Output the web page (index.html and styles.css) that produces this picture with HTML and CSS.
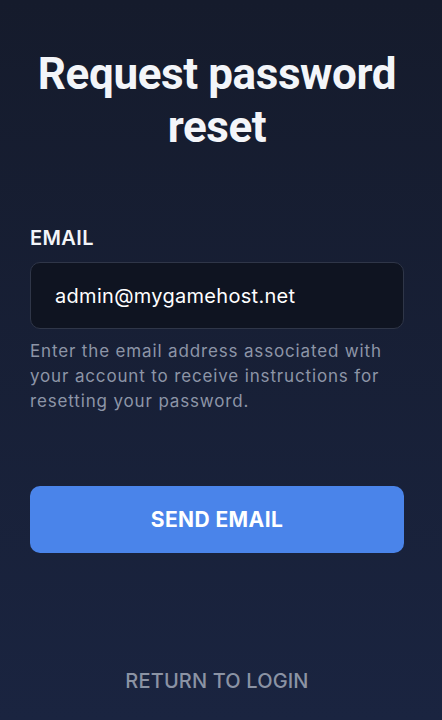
FILE: index.html
```html
<!DOCTYPE html>
<html lang="en">
<head>
  <meta charset="UTF-8">
  <title>Request password reset</title>
  <link rel="stylesheet" href="styles.css">
</head>
<body>
  <main class="reset-page">
    <h1 class="reset-title">Request password reset</h1>
    <form class="reset-form" onsubmit="return false;">
      <label class="field-label" for="email">EMAIL</label>
      <input class="field-input" id="email" type="email" value="admin@mygamehost.net">
      <p class="field-help">Enter the email address associated with your account to receive instructions for resetting your password.</p>
      <button class="send-btn" type="submit">SEND EMAIL</button>
    </form>
    <a class="back-link" href="#">RETURN TO LOGIN</a>
  </main>
</body>
</html>
```

FILE: styles.css
```css
html, body { height: 100%; }
body {
  margin: 0;
  font-family: Inter, "Noto Sans", sans-serif;
  background: linear-gradient(180deg, #151b2c 0%, #1a2440 100%);
  color: #f3f5f9;
}
.reset-page {
  display: flex;
  flex-direction: column;
  padding: 48px 38px 0 30px;
  box-sizing: border-box;
  height: 720px;
}
.reset-title {
  margin: 0;
  text-align: center;
  font-family: Roboto, Inter, sans-serif;
  font-size: 44px;
  line-height: 53px;
  font-weight: 700;
  letter-spacing: -0.4px;
}
.reset-form {
  display: flex;
  flex-direction: column;
  margin-top: 72px;
}
.field-label {
  font-size: 20px;
  font-weight: 600;
  line-height: 24px;
  letter-spacing: 0.4px;
}
.field-input {
  margin-top: 12px;
  height: 67px;
  box-sizing: border-box;
  padding: 0 24px;
  background: #0f1421;
  border: 1px solid #2f3648;
  border-radius: 10px;
  color: #fff;
  font-family: inherit;
  font-size: 20px;
  letter-spacing: 0.3px;
  outline: none;
}
.field-help {
  margin: 10px 0 0;
  font-size: 17px;
  line-height: 25px;
  color: #8d95a7;
  letter-spacing: 0.85px;
}
.send-btn {
  margin-top: 72px;
  height: 67px;
  border: 0;
  border-radius: 10px;
  background: #4a84ea;
  color: #fff;
  font-family: inherit;
  font-size: 21px;
  font-weight: 700;
  letter-spacing: 0.4px;
  cursor: pointer;
}
.back-link {
  margin-top: auto;
  margin-bottom: 27px;
  align-self: center;
  color: #8b93a4;
  text-decoration: none;
  font-size: 20px;
  line-height: 24px;
  font-weight: 500;
  letter-spacing: 0.15px;
}
```
